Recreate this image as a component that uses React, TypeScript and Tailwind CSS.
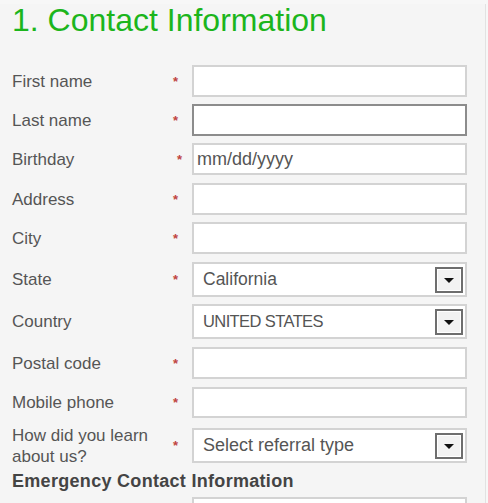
import React from 'react';

const font = { fontFamily: '"Liberation Sans", Arial, sans-serif' };

function Star({ shift = false }: { shift?: boolean }) {
  return (
    <span
      className={`text-[13px] font-bold leading-none text-[#c0443f] ${shift ? 'pl-[13px]' : 'pl-[9px]'}`}
    >
      *
    </span>
  );
}

function Arrow() {
  return (
    <div className="flex h-[26px] w-[28px] items-center justify-center border-2 border-[#6e6e6e] bg-[#f2f2f2] shadow-[inset_0_0_0_1px_#ffffff]">
      <svg width="12" height="8" viewBox="0 0 12 8" className="mt-[3px]">
        <polygon points="1,1 11,1 6,6" fill="#111" />
      </svg>
    </div>
  );
}

function TextInput({ dark = false, value = '', h = 'h-[32px]' }: { dark?: boolean; value?: string; h?: string }) {
  return (
    <div
      className={`flex ${h} w-[275px] items-center border-2 bg-white pl-[3px] text-[18px] text-[#555] ${
        dark ? 'border-[#8c8c8c]' : 'border-[#d3d3d3]'
      }`}
    >
      {value}
    </div>
  );
}

function SelectBox({ value, cls = 'text-[17.5px]' }: { value: string; cls?: string }) {
  return (
    <div className="flex h-[35px] w-[275px] items-center justify-between border-2 border-[#d3d3d3] bg-white pl-[9px] pr-[2px]">
      <span className={`${cls} text-[#555]`}>{value}</span>
      <Arrow />
    </div>
  );
}

type Row = {
  label: React.ReactNode;
  star?: boolean;
  shiftStar?: boolean;
  control: React.ReactNode;
  mt: string;
  h: string;
};

const rows: Row[] = [
  { label: 'First name', star: true, control: <TextInput />, mt: 'mt-0', h: 'h-[32px]' },
  { label: 'Last name', star: true, control: <TextInput dark />, mt: 'mt-[7px]', h: 'h-[32px]' },
  {
    label: 'Birthday',
    star: true,
    shiftStar: true,
    control: <TextInput value="mm/dd/yyyy" />,
    mt: 'mt-[7px]',
    h: 'h-[32px]',
  },
  { label: 'Address', star: true, control: <TextInput />, mt: 'mt-[8px]', h: 'h-[32px]' },
  { label: 'City', star: true, control: <TextInput />, mt: 'mt-[7px]', h: 'h-[32px]' },
  { label: 'State', star: true, control: <SelectBox value="California" />, mt: 'mt-[8px]', h: 'h-[35px]' },
  {
    label: 'Country',
    control: <SelectBox value="UNITED STATES" cls="text-[16.5px] tracking-[-0.6px]" />,
    mt: 'mt-[7px]',
    h: 'h-[35px]',
  },
  { label: 'Postal code', star: true, control: <TextInput />, mt: 'mt-[8px]', h: 'h-[32px]' },
  { label: 'Mobile phone', star: true, control: <TextInput h="h-[31px]" />, mt: 'mt-[8px]', h: 'h-[31px]' },
  {
    label: 'How did you learn about us?',
    star: true,
    control: <SelectBox value="Select referral type" cls="text-[18px]" />,
    mt: 'mt-[10px]',
    h: 'h-[35px]',
  },
];

export default function App() {
  return (
    <div className="h-[503px] w-[488px] overflow-hidden bg-[#f7f7f7]" style={font}>
      <div className="h-full w-[486px] border-r border-[#e2e2e2] bg-[#f5f5f5] pl-[12px]">
        <h1 className="mt-[4px] text-[32px] leading-none text-[#1cb51c]">1. Contact Information</h1>

        <div className="mt-[29px] flex flex-col">
          {rows.map((r, i) => (
            <div key={i} className={`flex items-center ${r.h} ${r.mt}`}>
              <div className="w-[152px] text-[17px] leading-[21px] text-[#555]">{r.label}</div>
              <div className="flex w-[28px] items-center">{r.star && <Star shift={r.shiftStar} />}</div>
              {r.control}
            </div>
          ))}

          <div className="mt-[8px] text-[18px] font-bold leading-[20px] tracking-[0.3px] text-[#444]">
            Emergency Contact Information
          </div>

          <div className="mt-[6px] flex items-center pl-[180px]">
            <TextInput />
          </div>
        </div>
      </div>
    </div>
  );
}
